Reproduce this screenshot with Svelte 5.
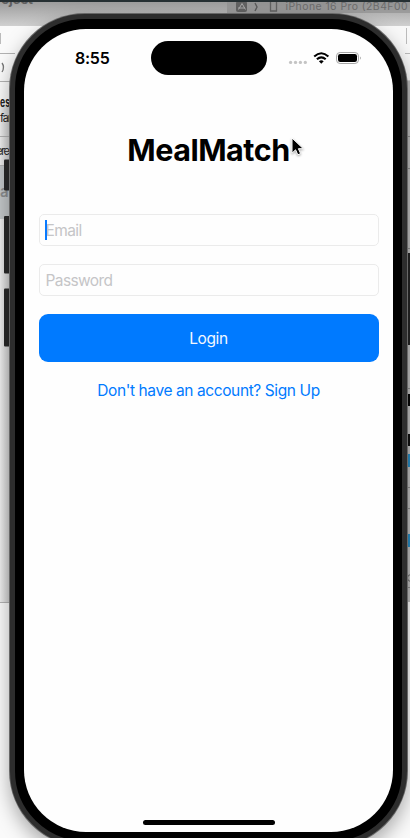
<script>
  let email = $state('');
  let password = $state('');
</script>

<main class="desktop">
  <svg class="backdrop" width="410" height="838" viewBox="0 0 410 838" aria-hidden="true">
    <defs>
      <linearGradient id="toolbar" x1="0" y1="0" x2="0" y2="1">
        <stop offset="0" stop-color="#989898" />
        <stop offset="1" stop-color="#d0d0d0" />
      </linearGradient>
      <linearGradient id="leftShade" x1="0" x2="1">
        <stop offset="0" stop-color="#eeeeee" />
        <stop offset="1" stop-color="#d0d0d0" />
      </linearGradient>
    </defs>
    <rect width="410" height="838" fill="#fafafa" />
    <rect width="410" height="602" fill="#d6d6d6" />
    <rect width="410" height="26" fill="url(#toolbar)" />
    <rect y="26" width="50" height="80" fill="#fafafa" />
    <rect x="365" y="26" width="45" height="54" fill="#f8f8f8" />
    <rect y="106" width="9" height="496" fill="url(#leftShade)" />
    <rect y="165" width="9" height="54" fill="#c2c6c8" />
    <path d="M0 53.500H15M0 81.500H10M0 136.500H9M0 165.500H9M0 602.500H9" stroke="#b2b2b2" />
    <path d="M.5 33v11" stroke="#bbb" />
    <path d="M2 63q3 4 0 9" fill="none" stroke="#777" stroke-width="1.3" />
    <text x="1" y="3.500" font-size="14" font-weight="700" fill="#606060" textLength="32">oject</text>
    <text x="0" y="107" font-size="13" font-weight="700" fill="#222" textLength="10" lengthAdjust="spacingAndGlyphs">es</text>
    <text x="0" y="122" font-size="11" fill="#222" textLength="12">far</text>
    <text x="-4" y="155" font-size="11" fill="#222" textLength="14">ere</text>
    <text x="0" y="197" font-size="15" font-weight="600" fill="#8b8d8f">a</text>
    <rect x="227" width="183" height="13" fill="#8f8f8f" opacity=".65" />
    <rect x="236" y="1" width="11" height="11" rx="2" fill="#626262" />
    <path d="M238.500 9.500 242 3.500l3.500 6M238 8h7" stroke="#aaa" fill="none" />
    <path d="m255 3 2 4-2 4" stroke="#5b5b5b" fill="none" stroke-width="1.4" />
    <path d="M270.500 0v11h6V0" stroke="#626262" fill="none" stroke-width="1.3" />
    <text x="285.500" y="9.800" font-size="10.400" fill="#6c6c6c" textLength="122">iPhone 16 Pro (2B4F00</text>
    <rect width="410" height="2" fill="#263033" />
    <path d="M406.500 28v16M405 53.500h5" stroke="#bbb" />
    <rect x="407" y="81" width="3" height="521" fill="#bcbcbc" />
    <path d="M407 136.500h3M407 168.500h3M407 248.500h3M407 388.500h3M407 487.500h3M407 508.500h3M407 587.500h3" stroke="#8d8d8d" />
    <rect x="407" y="253" width="3" height="92" fill="#252525" />
    <rect x="408" y="394" width="2" height="12" fill="#080808" />
    <rect x="408" y="434" width="2" height="12" fill="#111" />
    <rect x="408" y="454" width="2" height="13" fill="#288bc1" />
    <rect x="408" y="534" width="2" height="13" fill="#288bc1" />
    <circle cx="411" cy="578" r="3.500" fill="none" stroke="#666" />
    <g fill="#292929">
      <rect x="4" y="159.500" width="8" height="31" rx="1" />
      <rect x="4" y="216" width="8" height="57.500" rx="1" />
      <rect x="4" y="288.500" width="8" height="58" rx="1" />
    </g>
  </svg>

  <div class="phone">
    <section class="screen">
      <header class="status">
        <time>8:55</time>
        <div class="island"></div>
        <svg class="indicators" width="74" height="16" viewBox="0 0 74 16" aria-label="Network and battery status">
          <g fill="#c4c4c4">
            <circle cx="3.600" cy="11.400" r="1.650" /><circle cx="8.500" cy="11.400" r="1.650" />
            <circle cx="13.400" cy="11.400" r="1.650" /><circle cx="18.300" cy="11.400" r="1.650" />
          </g>
          <g fill="none" stroke="#000" stroke-width="2.100">
            <path d="M27.200 5.500Q34.300-1 41.400 5.500" />
            <path d="M29.900 8.300Q34.300 4.300 38.700 8.300" />
          </g>
          <path d="M31.900 10.200Q34.300 8.200 36.700 10.200L34.300 12.700Z" />
          <rect x="49.500" y="1.500" width="22" height="11" rx="3.600" fill="none" stroke="#a6a6a6" />
          <rect x="51" y="3" width="19" height="8" rx="2.200" />
          <path d="M73 5.400q1.400 1.700 0 3.400z" fill="#888" />
        </svg>
      </header>

      <h1>MealMatch</h1>
      <form onsubmit={(event) => event.preventDefault()}>
        <label class="field focused"><input type="email" placeholder="Email" aria-label="Email" bind:value={email} /></label>
        <label class="field"><input type="password" placeholder="Password" aria-label="Password" bind:value={password} /></label>
        <button class="login"><span>Login</span></button>
        <button class="signup" type="button">Don't have an account? Sign Up</button>
      </form>
      <div class="home"></div>
    </section>
  </div>

  <svg class="pointer" width="16" height="22" viewBox="0 0 16 22" aria-hidden="true">
    <path d="M2 2v15.200l3.600-3.400 2.200 5 2.800-1.200-2.200-4.900h4.900z" fill="#000" stroke="#fff" stroke-width="1" />
  </svg>
</main>

<style>
  :global(body) { overflow: hidden; background: #f5f5f5; }
  .desktop {
    position: relative;
    box-sizing: border-box;
    width: 410px;
    height: 838px;
    padding: 14px 0 0 10px;
    overflow: hidden;
    font-family: Inter, "Liberation Sans", sans-serif;
  }
  .backdrop { position: absolute; inset: 0; }
  .phone {
    position: relative;
    box-sizing: border-box;
    width: 397px;
    height: 832px;
    padding: 9px;
    border: 5px solid #2d2d2d;
    border-radius: 75px;
    background: #000;
    box-shadow: 0 0 0 1px #686868, 0 8px 20px 0 rgba(0, 0, 0, .35);
  }
  .screen {
    display: flex;
    flex-direction: column;
    align-items: center;
    box-sizing: border-box;
    width: 369px;
    height: 803px;
    margin: .5px 0 0 0;
    padding: 0 14.500px;
    border-radius: 62px;
    background: #fefefe;
    overflow: hidden;
  }
  .status {
    display: flex;
    align-self: stretch;
    align-items: flex-start;
    height: 48.500px;
    padding: 12.500px 0 0 36.500px;
  }
  time { width: 76px; padding-top: 7px; font: 600 16px/20px Inter, sans-serif; letter-spacing: -.25px; }
  .island { width: 116px; height: 34px; border-radius: 17px; background: #000; }
  .indicators { margin: 10px 0 0 20px; }
  h1 { margin: 40px 0 0; font-size: 30.500px; line-height: 40px; font-weight: 700; letter-spacing: -.5px; }
  form { display: flex; flex-direction: column; width: 340px; margin-top: 44px; }
  .field {
    display: flex;
    position: relative;
    box-sizing: border-box;
    height: 32px;
    margin-bottom: 18px;
    padding: 0 6px;
    border: 1px solid #ebebeb;
    border-radius: 5px;
  }
  .focused::before { content: ""; position: absolute; left: 5px; top: 5px; width: 2px; height: 20px; background: #087aff; }
  input { width: 100%; padding: 2px 0 0; border: 0; outline: 0; background: transparent; font: 400 15.500px/28px Inter, sans-serif; letter-spacing: -.6px; }
  input::placeholder { color: #c5c5c7; opacity: 1; }
  button { border: 0; padding: 0; font: 400 15.500px/20px Inter, sans-serif; letter-spacing: -.4px; }
  .login { height: 48px; padding-top: 2px; border-radius: 9px; background: #007aff; color: #f2f8ff; }
  .signup { height: 20px; margin-top: 19px; background: transparent; color: #007aff; }
  .home { width: 132px; height: 5px; margin-top: auto; margin-bottom: 7px; border-radius: 3px; background: #000; flex: none; }
  .pointer { position: absolute; left: 290px; top: 136px; filter: drop-shadow(0 1px 1px rgba(0, 0, 0, .35)); }
</style>
